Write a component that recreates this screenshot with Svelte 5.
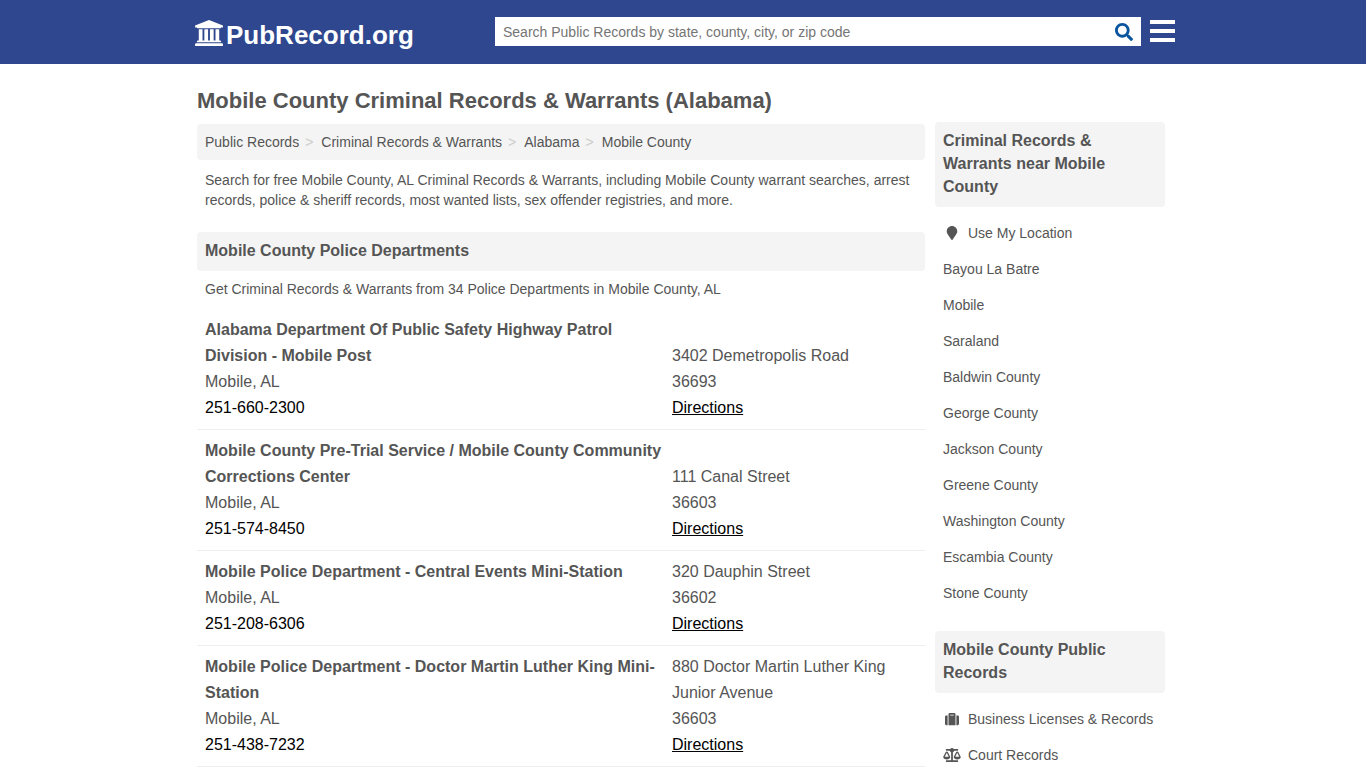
<script>
  const crumbs = ['Public Records', 'Criminal Records & Warrants', 'Alabama', 'Mobile County'];

  const departments = [
    { name: 'Alabama Department Of Public Safety Highway Patrol Division - Mobile Post', city: 'Mobile, AL', phone: '251-660-2300', street: '3402 Demetropolis Road', zip: '36693' },
    { name: 'Mobile County Pre-Trial Service / Mobile County Community Corrections Center', city: 'Mobile, AL', phone: '251-574-8450', street: '111 Canal Street', zip: '36603' },
    { name: 'Mobile Police Department - Central Events Mini-Station', city: 'Mobile, AL', phone: '251-208-6306', street: '320 Dauphin Street', zip: '36602' },
    { name: 'Mobile Police Department - Doctor Martin Luther King Mini-Station', city: 'Mobile, AL', phone: '251-438-7232', street: '880 Doctor Martin Luther King Junior Avenue', zip: '36603' }
  ];

  const places = ['Bayou La Batre', 'Mobile', 'Saraland', 'Baldwin County', 'George County', 'Jackson County', 'Greene County', 'Washington County', 'Escambia County', 'Stone County'];

  const icons = {
    marker: { box: '0 0 384 512', d: 'M172.268 501.67C26.97 291.031 0 269.413 0 192 0 85.961 85.961 0 192 0s192 85.961 192 192c0 77.413-26.97 99.031-172.268 309.67-9.535 13.774-29.93 13.773-39.464 0z' },
    suitcase: { box: '0 0 512 512', d: 'M128 480h256V80c0-26.5-21.5-48-48-48H176c-26.5 0-48 21.5-48 48v400zm64-384h128v32H192V96zm320 80v256c0 26.5-21.5 48-48 48h-48V128h48c26.5 0 48 21.5 48 48zM96 480H48c-26.5 0-48-21.5-48-48V176c0-26.5 21.5-48 48-48h48v352z' },
    scale: { box: '0 0 640 512', d: 'M256 336h-.02c0-16.18 1.34-8.73-85.05-181.51-17.65-35.29-68.19-35.36-85.87 0C-2.06 328.75.02 320.33.02 336H0c0 44.18 57.31 80 128 80s128-35.82 128-80zM128 176l72 144H56l72-144zm511.98 160c0-16.18 1.34-8.73-85.05-181.51-17.65-35.29-68.19-35.36-85.87 0-87.12 174.26-85.04 165.84-85.04 181.51H384c0 44.18 57.31 80 128 80s128-35.82 128-80h-.02zM440 320l72-144 72 144H440zm88 128H352V153.25c23.51-10.29 41.16-31.48 46.39-57.25H528c8.84 0 16-7.16 16-16V48c0-8.84-7.16-16-16-16H383.64C369.04 12.68 346.09 0 320 0s-49.04 12.68-63.64 32H112c-8.84 0-16 7.16-16 16v32c0 8.84 7.16 16 16 16h129.61c5.23 25.76 22.87 46.96 46.39 57.25V448H112c-8.84 0-16 7.16-16 16v32c0 8.84 7.16 16 16 16h416c8.84 0 16-7.16 16-16v-32c0-8.84-7.16-16-16-16z' }
  };
</script>

{#snippet icon(shape)}
  <svg class="icon" viewBox={shape.box} aria-hidden="true"><path d={shape.d} /></svg>
{/snippet}

<header>
  <div class="bar">
    <a class="logo" href="#home">
      <svg viewBox="0 0 1920 1792" aria-hidden="true"><path d="M960 0l960 384v128h-128q0 26-20.5 45t-48.5 19h-1526q-28 0-48.5-19t-20.5-45h-128v-128zM256 640h256v768h128v-768h256v768h128v-768h256v768h128v-768h256v768h59q28 0 48.5 19t20.5 45v64h-1664v-64q0-26 20.5-45t48.5-19h59v-768zM1851 1600q28 0 48.5 19t20.5 45v128h-1920v-128q0-26 20.5-45t48.5-19h1782z" /></svg>
      <span>PubRecord.org</span>
    </a>
    <form class="search">
      <input type="text" aria-label="Search public records" placeholder="Search Public Records by state, county, city, or zip code" />
      <button type="button" aria-label="Search">
        <svg viewBox="0 0 512 512" aria-hidden="true"><path d="M505 442.7L405.3 343c-4.5-4.5-10.6-7-17-7H372c27.6-35.3 44-79.7 44-128C416 93.1 322.9 0 208 0S0 93.1 0 208s93.1 208 208 208c48.3 0 92.7-16.4 128-44v16.3c0 6.4 2.5 12.5 7 17l99.7 99.7c9.4 9.4 24.6 9.4 33.9 0l28.3-28.3c9.4-9.4 9.4-24.6.1-34zM208 336c-70.7 0-128-57.2-128-128 0-70.7 57.2-128 128-128 70.7 0 128 57.2 128 128 0 70.7-57.2 128-128 128z" /></svg>
      </button>
    </form>
    <button class="menu" type="button" aria-label="Menu"><i></i><i></i><i></i></button>
  </div>
</header>

<div class="page">
  <main>
    <h1>Mobile County Criminal Records &amp; Warrants (Alabama)</h1>
    <nav aria-label="Breadcrumb">
      <ol class="crumbs">
        {#each crumbs as crumb}
          <li><a href="#crumb">{crumb}</a></li>
        {/each}
      </ol>
    </nav>
    <p class="intro">Search for free Mobile County, AL Criminal Records &amp; Warrants, including Mobile County warrant searches, arrest records, police &amp; sheriff records, most wanted lists, sex offender registries, and more.</p>
    <h2>Mobile County Police Departments</h2>
    <p class="note">Get Criminal Records &amp; Warrants from 34 Police Departments in Mobile County, AL</p>
    {#each departments as dept}
      <section class="dept">
        <div>
          <h3>{dept.name}</h3>
          <div>{dept.city}</div>
          <a href="tel:{dept.phone}">{dept.phone}</a>
        </div>
        <div>
          <div>{dept.street}</div>
          <div>{dept.zip}</div>
          <a class="directions" href="#directions">Directions</a>
        </div>
      </section>
    {/each}
  </main>

  <aside>
    <h2>Criminal Records &amp; Warrants near Mobile County</h2>
    <ul>
      <li><a href="#location">{@render icon(icons.marker)}Use My Location</a></li>
      {#each places as place}
        <li><a href="#place">{place}</a></li>
      {/each}
    </ul>
    <h2>Mobile County Public Records</h2>
    <ul>
      <li><a href="#business">{@render icon(icons.suitcase)}Business Licenses &amp; Records</a></li>
      <li><a href="#court">{@render icon(icons.scale)}Court Records</a></li>
    </ul>
  </aside>
</div>

<style>
  :global(body) {
    margin: 0;
    background: #fff;
    color: #555;
    font: 14px/20px "Liberation Sans", Arial, sans-serif;
  }
  h1, h2, h3, p, ul, ol { margin: 0; padding: 0; }
  ul, ol { list-style: none; }
  a { color: inherit; text-decoration: none; }
  svg { fill: currentColor; flex: none; }

  header { background: #2e478f; }
  .bar {
    box-sizing: border-box;
    max-width: 984px;
    height: 64px;
    margin: 0 auto;
    padding: 0 0 2px 4px;
    display: flex;
    align-items: center;
  }
  .logo {
    flex: 0 0 300px;
    display: flex;
    align-items: flex-start;
    gap: 3px;
    color: #fff;
    font-size: 26px;
    line-height: 30px;
    font-weight: bold;
    padding-top: 8px;
  }
  .logo svg { width: 28px; height: 26px; }
  .search {
    flex: 1;
    display: flex;
    height: 29px;
    background: #fff;
  }
  .search input {
    flex: 1;
    min-width: 0;
    border: 0;
    padding: 1px 8px 0;
    background: none;
    font: inherit;
    color: #555;
    outline: none;
  }
  .search input::placeholder { color: #757575; opacity: 1; }
  .search button {
    display: flex;
    align-items: center;
    border: 0;
    padding: 1px 8px 0;
    background: none;
    color: #0b559f;
  }
  .search button svg { width: 18px; height: 18px; }
  .menu {
    display: flex;
    flex-direction: column;
    gap: 5px;
    margin-left: 9px;
    border: 0;
    padding: 0;
    background: none;
  }
  .menu i { width: 25px; height: 4px; background: #fff; }

  .page {
    box-sizing: border-box;
    max-width: 984px;
    margin: 0 auto;
    padding: 0 10px 0 6px;
    display: flex;
    gap: 10px;
  }
  main { flex: 1; min-width: 0; padding-top: 23px; }
  h1 { font-size: 22px; line-height: 28px; margin-bottom: 9px; }
  h2 {
    padding: 7px 8px 9px;
    border-radius: 4px;
    background: #f4f4f4;
    font-size: 16px;
    line-height: 23px;
  }
  .crumbs {
    display: flex;
    padding: 8px;
    border-radius: 4px;
    background: #f4f4f4;
  }
  .crumbs li + li::before { content: ">"; padding: 0 8px 0 6px; color: #ccc; }
  .intro { padding: 10px 8px 22px; }
  .note { padding: 8px 8px 10px; }
  .dept {
    display: grid;
    grid-template-columns: 459px 1fr;
    column-gap: 8px;
    align-items: end;
    padding: 8px;
    border-bottom: 1px solid #eee;
    font-size: 16px;
    line-height: 26px;
  }
  .dept h3 { font-size: 16px; line-height: 26px; }
  .dept a { display: block; color: #000; }
  .dept .directions { text-decoration: underline; }

  aside { flex: 0 0 230px; padding-top: 58px; }
  aside ul { padding: 8px 0 20px; }
  aside li a { display: flex; align-items: center; padding: 8px; }
  .icon { width: 18px; height: 14px; margin-right: 7px; }
</style>
